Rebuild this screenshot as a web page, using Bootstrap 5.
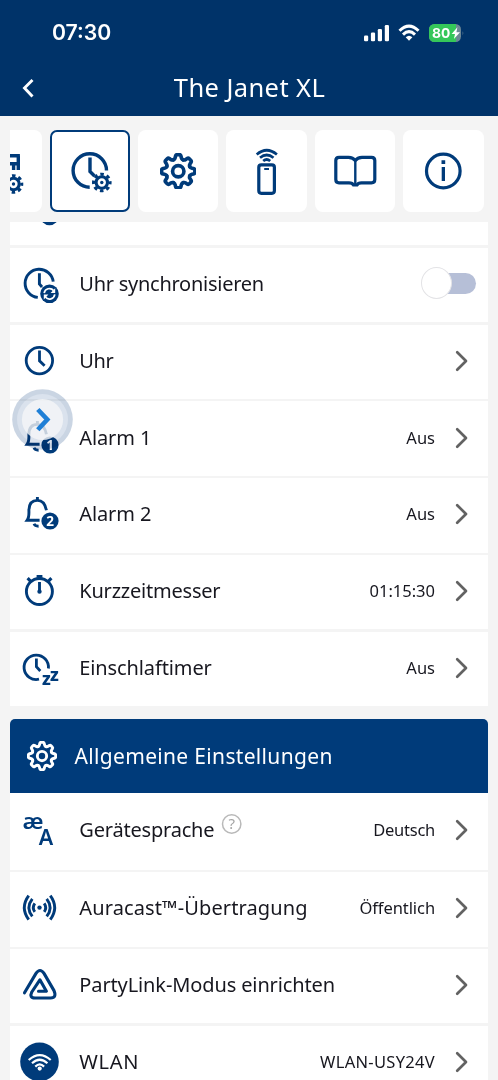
<!DOCTYPE html>
<html lang="de">
<head>
<meta charset="utf-8">
<meta name="viewport" content="width=device-width, initial-scale=1">
<title>The Janet XL</title>
<link href="https://cdn.jsdelivr.net/npm/bootstrap@5.3.0/dist/css/bootstrap.min.css" rel="stylesheet">
<style>
:root{--navy:#003b7a}
html,body{height:1080px;overflow:hidden}
body{background:#f4f4f4;color:#17171f;font-family:"Noto Sans","Open Sans",sans-serif;font-size:20px;line-height:1.4}
svg{display:block;flex:none}
.app-head{background:#003369;height:116.4px;color:#fff}
.status{height:66px;padding:0 32px 0 52px}
.clock{font:600 21.2px/1 Inter,sans-serif}
.title-bar{height:43px}
.title-bar .back{position:absolute;left:22px;top:10px}
.title-bar h1{font-size:25.5px;letter-spacing:.4px;line-height:1;font-weight:400;padding-left:1px}
.tabs-strip{margin:13.6px 10px 0;padding-right:4.4px;gap:8px;height:82px}
.tile{flex:none;width:80.4px;height:82px;background:#fff;border-radius:8px;color:var(--navy)}
.tile.active{border:2px solid var(--navy);border-radius:7px}
.settings{margin:0 10px;gap:2.4px}
.settings.first{margin-top:10.5px}
.item{background:#fff;height:74.4px;padding:0 19px 0 6px;flex:none}
.item .ic{color:var(--navy)}
.item .label{margin:-2px 0 0 17.3px;letter-spacing:var(--ls,-.12px);white-space:nowrap}
.item .val{font-size:16.5px;letter-spacing:var(--ls,0);margin:-3px 20px 0 0;white-space:nowrap}
.item.cut{height:23px;overflow:hidden}
.chev{color:#626262;margin-top:-2px}
.banner{background:var(--navy);color:#fff;height:74.5px;margin:12.5px 10px 0;border-radius:5px 5px 0 0;padding-left:16.5px;font-size:21px;letter-spacing:.33px}
.banner span{margin:2px 0 0 18px}
.toggle{width:56px;height:32px;position:relative;margin:-4px -8px 0 0}
.toggle::before{content:"";position:absolute;left:5px;right:1px;top:5.5px;height:21px;border-radius:11px;background:#b6bfd7}
.toggle::after{content:"";position:absolute;left:0;top:0;width:31px;height:32px;border-radius:50%;background:#fff;border:1.3px solid #e3e3e6}
.float-btn{position:absolute;left:11.5px;top:389px}
.float-ring{mix-blend-mode:multiply}
text{font-family:"Noto Sans",sans-serif}
</style>
</head>
<body>
<svg width="0" height="0" class="position-absolute" aria-hidden="true">
  <defs>
    <path id="tooth" d="M-4.7 -11.3Q-3.3 -11.9 -3 -13.5L-2.7 -15Q-2.4 -16.4 -1 -16.4H1Q2.4 -16.4 2.7 -15L3 -13.5Q3.3 -11.9 4.7 -11.3"/>
    <g id="gear" fill="none" stroke="currentColor" stroke-linecap="round" transform="translate(18 18)">
      <use href="#tooth"/><use href="#tooth" transform="rotate(45)"/><use href="#tooth" transform="rotate(90)"/><use href="#tooth" transform="rotate(135)"/>
      <use href="#tooth" transform="rotate(180)"/><use href="#tooth" transform="rotate(225)"/><use href="#tooth" transform="rotate(270)"/><use href="#tooth" transform="rotate(315)"/>
      <circle r="5.6"/>
    </g>
    <g id="cog">
      <circle r="5.7" fill="none" stroke="currentColor" stroke-width="3.1"/>
      <circle r="8.3" fill="none" stroke="currentColor" stroke-width="3" stroke-dasharray="3.5 3.019" stroke-dashoffset="1.75"/>
      <circle r="1.7" fill="currentColor"/>
    </g>
    <path id="chevron" d="M2.2 2.2 L11 11 L2.2 19.8" fill="none" stroke="currentColor" stroke-width="2.7" stroke-linecap="round" stroke-linejoin="round"/>
  </defs>
</svg>

<header class="app-head">
  <div class="status d-flex align-items-center">
    <span class="clock me-auto">07:30</span>
    <svg width="26" height="18" viewBox="0 0 26 18" fill="#fff"><rect x="0" y="11.5" width="4.2" height="5.7" rx="1.2"/><rect x="6.9" y="8.5" width="4.2" height="8.7" rx="1.2"/><rect x="13.8" y="5" width="4.2" height="12.2" rx="1.2"/><rect x="20.8" y="1" width="4.2" height="16.2" rx="1.2"/></svg>
    <svg width="24" height="18" viewBox="0 0 24 18" class="ms-2 me-2" fill="none" stroke="#fff" stroke-width="3"><path d="M1.5 6.8 Q11 -2.6 20.5 6.8"/><path d="M5 10.6 Q11 4.8 17 10.6"/><path d="M7.7 13.2 Q11 10.2 14.4 13.2 L11 16.8Z" fill="#fff" stroke="none"/></svg>
    <svg width="36" height="20" viewBox="1 0 36 20" overflow="visible"><rect x="0" y="1" width="32" height="18" rx="5.5" fill="#6d8795"/><path d="M5.5 1H27V19H5.5A5.5 5.5 0 0 1 0 13.5V6.5A5.5 5.5 0 0 1 5.5 1Z" fill="#35c759"/><path d="M33.6 8v4.4q1.6-2.2 0-4.4Z" fill="#6d8795"/><text x="3" y="14.8" font-size="13.8" font-weight="700" fill="#fff" style="font-family:Inter,sans-serif">80</text><path d="M28.4 4.2 L22.6 11 H26 L24.9 16 L31 9.2 H27.4Z" fill="#fff"/></svg>
  </div>
  <div class="title-bar position-relative d-flex align-items-center justify-content-center">
    <svg class="back" width="14" height="24" viewBox="0 0 14 24"><path d="M10.5 4 L2.5 12 L10.5 20.5" fill="none" stroke="#fff" stroke-width="2.9"/></svg>
    <h1 class="mb-0">The Janet XL</h1>
  </div>
</header>

<nav class="tabs-strip d-flex justify-content-end overflow-hidden">
  <div class="tile"><svg width="80" height="82" viewBox="0 0 80 82"><path d="M45 25.8H58.9M57.3 25.8V40M45 33.8H57.3M52.6 33.8V40" fill="none" stroke="currentColor" stroke-width="3.4"/><use href="#cog" x="52.5" y="54"/></svg></div>
  <div class="tile active"><svg width="76" height="78" viewBox="2 2 76 78"><g fill="none" stroke="currentColor" stroke-width="3.4"><path d="M39.7 57.2 A16.7 16.7 0 1 1 56.5 40.5"/><path d="M40 27.5V41.5L44.5 46"/></g><use href="#cog" x="51.8" y="52.5"/></svg></div>
  <div class="tile d-flex align-items-center justify-content-center"><svg width="36.5" height="36.5" viewBox="0 0 36 36" stroke-width="3.6"><use href="#gear"/></svg></div>
  <div class="tile"><svg width="80" height="82" viewBox="0 0 80 82" fill="none" stroke="currentColor" stroke-width="3.2"><rect x="32.8" y="34.8" width="15.6" height="28.5" rx="2.5"/><path d="M38.2 39H43" stroke-width="2"/><path d="M30.7 24.5 Q40.7 16 50.9 24.5M34 27.8Q40.7 22.2 47.5 27.8M37.2 31Q40.7 28 44.2 31" stroke-width="2.7"/></svg></div>
  <div class="tile"><svg width="80" height="82" viewBox="0 0 80 82" fill="none" stroke="currentColor" stroke-width="3.2" stroke-linejoin="round"><path d="M40.3 30.5Q38 27.3 33.5 27.3H24Q20.8 27.3 20.8 30.5V49.5Q20.8 52.8 24 52.8H34Q37.5 52.8 38.5 55H42Q43 52.8 46.5 52.8H56.5Q59.8 52.8 59.8 49.5V30.5Q59.8 27.3 56.5 27.3H47Q42.5 27.3 40.3 30.5Z"/><path d="M40.3 30V55" stroke-width="2.4"/></svg></div>
  <div class="tile"><svg width="80" height="82" viewBox="0 0 80 82"><circle cx="40.3" cy="41" r="16.8" fill="none" stroke="currentColor" stroke-width="3.2"/><path d="M38.5 30.3h3.7v3.6h-3.7zM38.7 37h3.3v14h-3.3z" fill="currentColor"/></svg></div>
</nav>

<main>
  <section class="settings first d-flex flex-column">
    <div class="item cut"><svg class="ic" width="46" height="23" viewBox="0 0 46 23"><circle cx="33.5" cy="-6" r="9.3" fill="currentColor"/></svg></div>

    <div class="item d-flex align-items-center">
      <svg class="ic" width="46" height="46" viewBox="0 0 46 46"><g fill="none" stroke="currentColor" stroke-width="2.9"><path d="M21.8 35.4A14.1 14.1 0 1 1 37.2 19.6"/><path d="M23.4 11.3V22L26 25"/></g><circle cx="33.5" cy="31.8" r="9.3" fill="currentColor"/><g fill="none" stroke="#fff" stroke-width="1.7"><path d="M28.2 31.2A5.3 5.3 0 0 1 37.6 28.6M38.8 32.4A5.3 5.3 0 0 1 29.4 35"/></g><path d="M39.2 26.2V31H34.6ZM27.8 37.4V32.6H32.4Z" fill="#fff"/></svg>
      <span class="label me-auto" style="--ls:-.26px">Uhr synchronisieren</span>
      <span class="toggle" role="switch" aria-checked="false"></span>
    </div>

    <div class="item d-flex align-items-center">
      <svg class="ic" width="46" height="46" viewBox="0 0 46 46" fill="none" stroke="currentColor" stroke-width="2.8"><circle cx="23.4" cy="21.6" r="13.2"/><path d="M23.5 11.5V21.8L28.6 26.8"/></svg>
      <span class="label me-auto" style="--ls:-.4px">Uhr</span>
      <svg class="chev" width="14" height="22"><use href="#chevron"/></svg>
    </div>

    <div class="item d-flex align-items-center">
      <svg class="ic" width="46" height="46" viewBox="0 0 46 46"><g id="bell" fill="none" stroke="currentColor" stroke-width="2.9"><path d="M21.4 5V9"/><path d="M23.6 28.2H11.2Q13.2 25.5 12.9 18.5Q13 8.4 21.4 8.4Q28.6 8.4 30.4 18.3"/><path d="M18 31.8Q19 34.2 22.6 34.2"/></g><circle cx="34" cy="29" r="8.6" fill="currentColor"/><text x="34" y="33.9" font-size="13.5" font-weight="700" fill="#fff" text-anchor="middle">1</text></svg>
      <span class="label me-auto">Alarm 1</span>
      <span class="val">Aus</span>
      <svg class="chev" width="14" height="22"><use href="#chevron"/></svg>
    </div>

    <div class="item d-flex align-items-center">
      <svg class="ic" width="46" height="46" viewBox="0 0 46 46"><use href="#bell"/><circle cx="34" cy="29" r="8.6" fill="currentColor"/><text x="34" y="33.9" font-size="13.5" font-weight="700" fill="#fff" text-anchor="middle">2</text></svg>
      <span class="label me-auto">Alarm 2</span>
      <span class="val">Aus</span>
      <svg class="chev" width="14" height="22"><use href="#chevron"/></svg>
    </div>

    <div class="item d-flex align-items-center">
      <svg class="ic" width="46" height="46" viewBox="0 0 46 46" fill="none" stroke="currentColor" stroke-width="2.9"><circle cx="23.4" cy="22.5" r="13"/><path d="M20.6 7.4H26.4M23.5 6.5V10"/><path d="M11.6 9.2L15.2 12.8M35.4 9.2L31.8 12.8" stroke-width="3.2"/><path d="M23.5 13V23"/><circle cx="23.5" cy="22.6" r="1.2" stroke-width="2"/></svg>
      <span class="label me-auto" style="--ls:-.22px">Kurzzeitmesser</span>
      <span class="val">01:15:30</span>
      <svg class="chev" width="14" height="22"><use href="#chevron"/></svg>
    </div>

    <div class="item d-flex align-items-center">
      <svg class="ic" width="46" height="46" viewBox="0 0 46 46"><g fill="none" stroke="currentColor" stroke-width="2.8"><path d="M23 33.2A12.2 12.2 0 1 1 32.4 22.5"/><path d="M20.4 12.5V20.8L24.3 25"/></g><g font-size="17.6" font-weight="800" fill="currentColor"><text x="26" y="38.8">z</text><text x="34.1" y="35.2">z</text></g></svg>
      <span class="label me-auto">Einschlaftimer</span>
      <span class="val">Aus</span>
      <svg class="chev" width="14" height="22"><use href="#chevron"/></svg>
    </div>
  </section>

  <h2 class="banner d-flex align-items-center mb-0 fw-normal">
    <svg width="30" height="30" viewBox="0 0 36 36" stroke-width="3.5"><use href="#gear"/></svg>
    <span>Allgemeine Einstellungen</span>
  </h2>

  <section class="settings d-flex flex-column">
    <div class="item d-flex align-items-center" style="height:76.6px">
      <svg class="ic" width="46" height="46" viewBox="0 0 46 46" fill="currentColor" font-weight="600" overflow="visible"><text x="6.6" y="20.8" font-size="22" textLength="21" lengthAdjust="spacingAndGlyphs">æ</text><text x="22.8" y="37" font-size="21.5">A</text></svg>
      <span class="label" style="--ls:-.2px">Gerätesprache</span>
      <svg class="ms-2 me-auto" width="20" height="20" viewBox="0 0 20 20" overflow="visible" style="margin-top:-15px"><circle cx="9.7" cy="10" r="9.2" fill="none" stroke="#b9b9b9" stroke-width="1.5"/><text x="9.7" y="15.2" font-size="15" fill="#a5a5a5" text-anchor="middle">?</text></svg>
      <span class="val" style="--ls:-.25px">Deutsch</span>
      <svg class="chev" width="14" height="22"><use href="#chevron"/></svg>
    </div>

    <div class="item d-flex align-items-center">
      <svg class="ic" width="46" height="46" viewBox="0 0 46 46" fill="none" stroke="currentColor" stroke-width="2.9"><circle cx="23.5" cy="21.6" r="2.2" fill="currentColor" stroke="none"/><path d="M18.8 17.3Q15.8 21.6 18.8 25.9M28.2 17.3Q31.2 21.6 28.2 25.9M16.3 12.8Q9.5 21.6 16.3 30.4M30.7 12.8Q37.5 21.6 30.7 30.4M12.7 9.6Q3.9 21.6 12.7 33.6M34.3 9.6Q43.1 21.6 34.3 33.6"/></svg>
      <span class="label me-auto" style="--ls:.12px">Auracast™-Übertragung</span>
      <span class="val" style="--ls:-.08px">Öffentlich</span>
      <svg class="chev" width="14" height="22"><use href="#chevron"/></svg>
    </div>

    <div class="item d-flex align-items-center">
      <svg class="ic" width="46" height="46" viewBox="0 0 46 46" fill="none" stroke="currentColor" stroke-width="3.1" stroke-linecap="round" stroke-linejoin="round"><path d="M8.5 29.8L20 10.4Q24 4.6 28 10.4L38 27.6Q41 34.8 34.5 35H19Q13 34.8 15.8 29L23.9 16.8L30.4 28.2H22.5"/></svg>
      <span class="label me-auto">PartyLink-Modus einrichten</span>
      <svg class="chev" width="14" height="22"><use href="#chevron"/></svg>
    </div>

    <div class="item d-flex align-items-center">
      <svg class="ic" width="46" height="46" viewBox="0 0 46 46"><circle cx="23.5" cy="21.8" r="19.3" fill="currentColor"/><g fill="none" stroke="#fff" stroke-width="2.2"><path d="M12.7 20Q23.7 10.2 34.7 20M16 23.3Q23.7 16.2 31.4 23.3M19.3 26.6Q23.7 22.3 28.1 26.6"/></g><circle cx="23.7" cy="28.6" r="2.1" fill="#fff"/></svg>
      <span class="label me-auto" style="--ls:.7px">WLAN</span>
      <span class="val" style="--ls:.3px">WLAN-USY24V</span>
      <svg class="chev" width="14" height="22"><use href="#chevron"/></svg>
    </div>
  </section>
</main>

<svg class="float-btn float-ring" width="61" height="61" viewBox="0 0 61 61"><circle cx="30.5" cy="30.5" r="30.3" fill="#cad5e3"/><circle cx="30.5" cy="30.5" r="25.5" fill="#dae2ed"/></svg>
<svg class="float-btn" width="61" height="61" viewBox="0 0 61 61"><circle cx="30.5" cy="30.5" r="20.6" fill="#f5f6f8" fill-opacity=".8"/><path d="M25.8 20.5L35.3 30.5L25.8 40.8" fill="none" stroke="#1f7fd6" stroke-width="4.6"/></svg>
<script src="https://cdn.jsdelivr.net/npm/bootstrap@5.3.0/dist/js/bootstrap.bundle.min.js"></script>
</body>
</html>
